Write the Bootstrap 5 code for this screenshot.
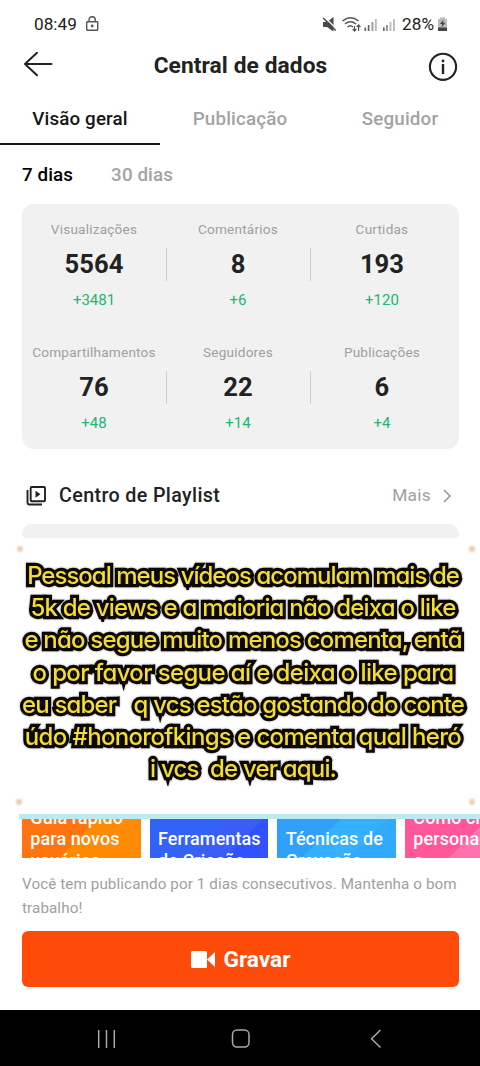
<!DOCTYPE html>
<html lang="pt-BR">
<head>
<meta charset="utf-8">
<meta name="viewport" content="width=device-width, initial-scale=1">
<title>Central de dados</title>
<link href="https://cdn.jsdelivr.net/npm/bootstrap@5.3.0/dist/css/bootstrap.min.css" rel="stylesheet">
<style>
body{font-family:Roboto,"Liberation Sans",sans-serif;color:#222;background:#fff;width:480px;height:1066px;overflow:hidden;line-height:1.2}
svg{display:block;flex:none}
.statusbar{height:48px;padding:0 33px 0 34px;font-size:17.2px}
.appbar{height:36px;padding:0 22px 0 23px}
.appbar h1{font-size:22.7px;font-weight:700;letter-spacing:.1px;padding-bottom:1px}
.tabs{height:61px}
.tabs .nav-link{padding:25px 0 0;height:61px;font-size:18.8px;line-height:20px;font-weight:500;color:#a3a3a3;letter-spacing:.15px;border-radius:0}
.tabs .nav-link.active{color:#161616;border-bottom:2.5px solid #161616}
.period{height:59px;padding:2px 22px 0;font-size:18.8px;font-weight:500;gap:38px;letter-spacing:.1px}
.muted{color:#a3a3a3}
.stats{margin:0 21px 0 22px;padding-right:5px;height:245px;background:#f1f1f1;border-radius:12px}
.stats .cell{height:123px;padding-top:17px;text-align:center;position:relative}
.stat-label{font-size:13.6px;line-height:16px;color:#a0a0a0;white-space:nowrap;letter-spacing:.2px}
.stat-value{font-size:25.6px;line-height:30px;font-weight:700;margin-top:12px}
.stat-delta{font-size:15px;line-height:18px;color:#22b573;margin-top:12px}
.rule::after{content:"";position:absolute;right:-1px;top:44px;height:33px;width:1px;background:#cfcfcf}
.playlist{height:75px;padding:18px 25px 0}
.playlist .name{font-size:19.7px;font-weight:500;letter-spacing:.37px}
.playlist .more{font-size:17.3px;color:#a0a0a0;letter-spacing:.3px}
.strip{height:14px;margin:0 21px 0 22px;background:#f1f1f1;border-radius:12px 12px 5px 5px}
.caption-box{height:276px;position:relative;padding-top:22px}
.spark{position:absolute;width:6px;height:6px;border-radius:50%;background:#e9cbb0;filter:blur(.8px)}
.cap-line{height:32.2px;line-height:32.2px;font-family:Inter,Roboto,sans-serif;font-feature-settings:"cv11";font-size:24px;font-weight:500;color:#f5dc35;white-space:pre;letter-spacing:-1px;word-spacing:.2px;margin-left:6px;-webkit-text-stroke:6.4px #0c0903;paint-order:stroke fill;stroke-linejoin:round;filter:drop-shadow(0 0 1px #5558)}
.cap-line.wide{letter-spacing:-.85px}
.cap-line.wider{letter-spacing:-.67px}
.cyan{height:5px;margin-left:19px;background:#bdeaf0}
.tiles{height:39px;padding-left:22px;gap:9px;overflow:hidden}
.tile{width:118.7px;height:39px;flex:none;overflow:hidden;padding-left:8.3px;color:#fff;font-size:18px;font-weight:500;line-height:21.6px;white-space:nowrap;letter-spacing:.08px}
.tile div{margin-top:-12.2px}
.tile .low{margin-top:9.4px}
.t1{background:linear-gradient(135deg,#ff7410 0 48%,#ff8a06 48%)}
.t2{background:linear-gradient(135deg,#3362f8 0 50%,#3a5df5 50% 72%,#3053ff 72%)}
.t3{background:linear-gradient(135deg,#31a0fb 0 40%,#34b0ff 40% 70%,#31a9fd 70%)}
.t4{background:linear-gradient(135deg,#ff5797 0 52%,#ff72ae 52%)}
.note{height:73px;padding:14px 22px 0;font-size:15.2px;line-height:24px;color:#a0a0a0;letter-spacing:.1px;white-space:nowrap}
.record{display:flex;margin:0 21px 0 22px;width:437px;height:56px;padding-top:8px;background:#ff4b0a;color:#fff;border:0;border-radius:6px;font-size:22.7px;font-weight:700}
.navsys{margin-top:23px;height:56px;background:#000}
</style>
</head>
<body>
<header class="statusbar d-flex align-items-center">
  <span>08:49</span>
  <svg class="ms-2" width="16" height="18" viewBox="0 0 16 18" fill="none" stroke="#555" stroke-width="1.400"><rect x="1.700" y="6.800" width="11" height="8.400" rx=".6"/><path d="M4.100 6.800V4.800a3.100 3.100 0 0 1 6.200 0v2"/><circle cx="7.200" cy="11" r=".7" fill="#555"/></svg>
  <svg class="ms-auto" width="78" height="20" viewBox="0 0 78 20"><g fill="#4a4a4a"><path d="M1 8h4l6.500-5v14.500L5 13H1z"/><path d="M2.500 3L15 15.500" stroke="#fff" stroke-width="1.300"/><path d="M1.200 4L13.700 16.500" stroke="#4a4a4a" stroke-width="1.500"/></g>
  <g fill="none" stroke="#555" stroke-width="1.500"><path d="M20.500 7q8-6.500 16 0M23 10q5.500-4.500 11 0M25.500 13q3-2.600 5.500 0"/><path d="M32.500 12v5m-1.800-2l1.800 2 1.800-2M36.600 17v-6m-1.800 2l1.800-2 1.800 2" stroke-width="1.200"/></g>
  <g fill="#666"><path d="M42.500 13.500h1.700V17h-1.700zM45.800 11h1.700v6h-1.700zM61 13.500h1.700V17H61zM64.300 11h1.300v6h-1.300z"/><path fill="#999" d="M49.500 8h1.900v9h-1.900z"/><path fill="#bbb" d="M52.900 5h1.900v12h-1.900zM67.500 8h1.900v9h-1.900zM71 5h1.900v12H71z"/></g></svg>
  <span style="margin-left:2px">28%</span>
  <svg style="margin-left:3px;margin-right:-1px" width="11" height="18" viewBox="0 0 11 18"><path d="M3 2.500h5V4h2v12H1V4h2z" fill="#bbb"/><path d="M1 12.500h9V16H1z" fill="#444"/><path d="M6.500 4.500L3 9h2.300l-.8 3.500L8.300 7.700H6z" fill="#444"/></svg>
</header>
<div class="appbar d-flex align-items-center justify-content-between">
  <svg width="30" height="28" viewBox="0 0 30 28" fill="none" stroke="#222" stroke-width="2" stroke-linecap="round" stroke-linejoin="round"><path d="M28.500 12H2M14 .8L2 12l12 11.200"/></svg>
  <h1 class="mb-0">Central de dados</h1>
  <svg width="30" height="30" viewBox="0 0 30 30"><circle cx="15" cy="15.800" r="13.100" fill="none" stroke="#222" stroke-width="2.100"/><circle cx="15" cy="10" r="1.400" fill="#222"/><path d="M15 13V23" stroke="#222" stroke-width="2.400"/></svg>
</div>
<nav class="tabs nav nav-fill flex-nowrap">
  <a class="nav-link active col-4">Visão geral</a><a class="nav-link col-4">Publicação</a><a class="nav-link col-4">Seguidor</a>
</nav>
<div class="period d-flex align-items-center"><span class="text-black">7 dias</span><span class="muted">30 dias</span></div>
<section class="stats row g-0">
  <div class="col-4 cell rule"><div class="stat-label">Visualizações</div><div class="stat-value">5564</div><div class="stat-delta">+3481</div></div>
  <div class="col-4 cell rule"><div class="stat-label">Comentários</div><div class="stat-value">8</div><div class="stat-delta">+6</div></div>
  <div class="col-4 cell"><div class="stat-label">Curtidas</div><div class="stat-value">193</div><div class="stat-delta">+120</div></div>
  <div class="col-4 cell rule"><div class="stat-label">Compartilhamentos</div><div class="stat-value">76</div><div class="stat-delta">+48</div></div>
  <div class="col-4 cell rule"><div class="stat-label">Seguidores</div><div class="stat-value">22</div><div class="stat-delta">+14</div></div>
  <div class="col-4 cell"><div class="stat-label">Publicações</div><div class="stat-value">6</div><div class="stat-delta">+4</div></div>
</section>
<div class="playlist d-flex align-items-center">
  <svg width="22" height="22" viewBox="0 0 22 22" fill="none" stroke="#222" stroke-width="1.900"><rect x="5.700" y="2" width="14.300" height="14.300" rx="1"/><path d="M2.500 5v12.500q0 2 2 2H17"/><path d="M10.500 5.700v7l5-3.500z" fill="#222" stroke="none"/></svg>
  <span class="name ms-2 ps-1">Centro de Playlist</span>
  <span class="more ms-auto">Mais</span>
  <svg class="ms-2" width="16" height="16" viewBox="0 0 16 16" fill="none" stroke="#999" stroke-width="1.700"><path d="M5 2l6 6-6 6"/></svg>
</div>
<div class="strip"></div>
<section class="caption-box text-center">
  <i class="spark" style="left:17px;top:8px"></i><i class="spark" style="left:469px;top:8px"></i>
  <i class="spark" style="left:16px;top:261px"></i><i class="spark" style="left:469px;top:261px"></i>
  <div class="cap-line">Pessoal meus vídeos acomulam mais de</div>
  <div class="cap-line wide">5k de views e a maioria não deixa o like</div>
  <div class="cap-line wide">e não segue muito menos comenta, entã</div>
  <div class="cap-line wider">o por favor segue aí e deixa o like para</div>
  <div class="cap-line wide">eu saber   q vcs estão gostando do conte</div>
  <div class="cap-line wider">údo #honorofkings e comenta qual heró</div>
  <div class="cap-line wide">i vcs  de ver aqui.</div>
</section>
<div class="cyan"></div>
<section class="tiles d-flex">
  <div class="tile t1"><div>Guia rápido<br>para novos<br>usuários</div></div>
  <div class="tile t2"><div class="low">Ferramentas<br>de Criação</div></div>
  <div class="tile t3"><div class="low">Técnicas de<br>Gravação</div></div>
  <div class="tile t4"><div>Como criar<br>personagens<br>e</div></div>
</section>
<div class="note">Você tem publicando por 1 dias consecutivos. Mantenha o bom<br>trabalho!</div>
<button class="record btn align-items-center justify-content-center gap-2">
  <svg width="25" height="18" viewBox="0 0 25 18" fill="#fff"><rect x="1" y="0" width="16" height="17" rx="1.500"/><path d="M17 8.500L25 1v15z"/></svg>Gravar
</button>
<footer class="navsys d-flex align-items-center">
  <svg width="480" height="56" viewBox="0 0 480 56" fill="none" stroke="#aaa" stroke-width="1.500"><path d="M98.700 20v18M106.500 20v18M114.300 20v18"/><rect x="232.500" y="20" width="16.500" height="17" rx="4.500"/><path d="M380.500 20l-9 8.800 9 8.700"/></svg>
</footer>
<script src="https://cdn.jsdelivr.net/npm/bootstrap@5.3.0/dist/js/bootstrap.bundle.min.js"></script>
</body>
</html>
